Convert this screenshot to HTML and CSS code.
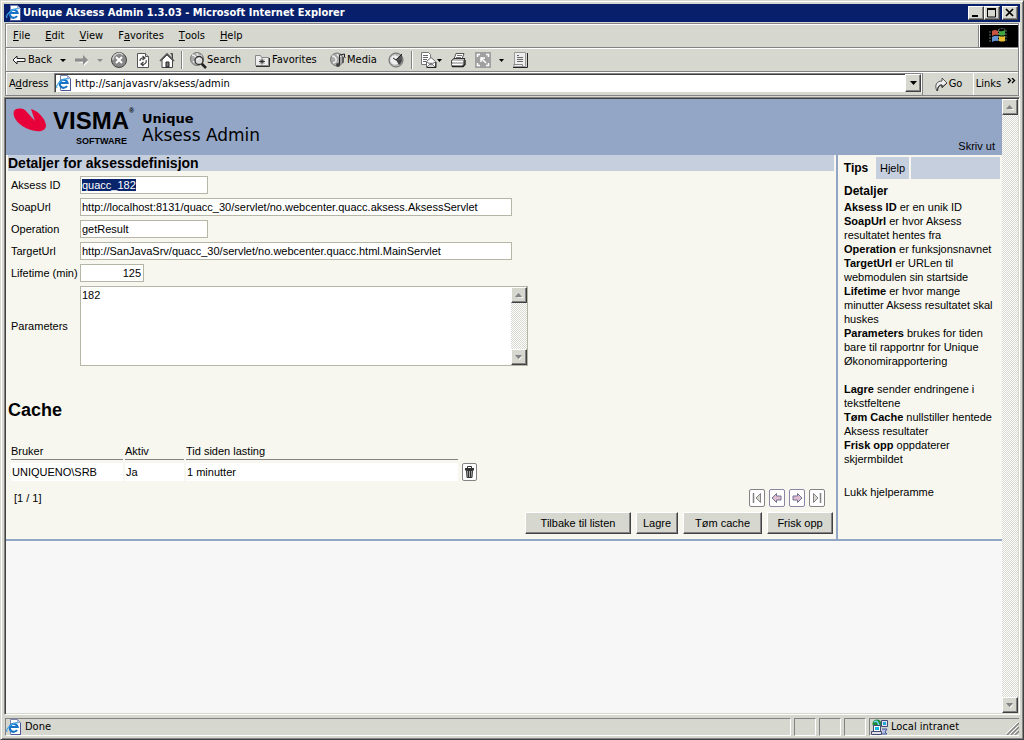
FILE: index.html
```
<!DOCTYPE html>
<html lang="no">
<head>
<meta charset="utf-8">
<title>Unique Aksess Admin 1.3.03</title>
<link rel="stylesheet" href="styles.css">
</head>
<body>
<svg class="defs" aria-hidden="true">
  <symbol id="ie" viewBox="0 0 16 16">
    <path d="M4.500.5h7l3 3v12h-10z" fill="#fff" stroke="#7b86b5"/>
    <path d="M14.500 4v11.500H5" fill="none" stroke="#4a559c"/>
    <path d="M11.500.5v3h3z" fill="#b5c3e7" stroke="#7b86b5" stroke-width=".6"/>
    <path d="M11 11a4 4 0 1 1 .6-3H4" fill="none" stroke="#1873c6" stroke-width="2.200"/>
    <path d="M1 13C-1 10 8 2 12.500 4" fill="none" stroke="#42a6e7" stroke-width="1.200"/>
  </symbol>
  <symbol id="up" viewBox="0 0 8 5"><path d="M1 5h7v-1z" fill="#fff"/><path d="M0 4h7L3.500 0z" fill="#848284"/></symbol>
  <symbol id="down" viewBox="0 0 8 5"><path d="M8 1L4.500 5l-1-1z" fill="#fff"/><path d="M0 0h7L3.500 4z" fill="#848284"/></symbol>
</svg>
<div class="window">
  <header class="titlebar">
    <svg class="i16"><use href="#ie"/></svg>
    <span class="title">Unique Aksess Admin 1.3.03 - Microsoft Internet Explorer</span>
    <button class="wbtn" aria-label="Minimize"><svg width="12" height="10"><path d="M2 7h6v2H2z"/></svg></button>
    <button class="wbtn" aria-label="Maximize"><svg width="12" height="10"><path d="M1.500 1v8h8V1M1 1h9" fill="none" stroke="#000"/><path d="M1 0h9v2H1z"/></svg></button>
    <button class="wbtn close" aria-label="Close"><svg width="12" height="10"><path d="M2 1l7 7M9 1L2 8" stroke="#000" stroke-width="1.700"/></svg></button>
  </header>
  <div class="bars">
    <div class="menurow">
      <nav class="menu">
        <button><u>F</u>ile</button><button><u>E</u>dit</button><button><u>V</u>iew</button><button>F<u>a</u>vorites</button><button><u>T</u>ools</button><button><u>H</u>elp</button>
      </nav>
      <div class="throbber"><svg width="20" height="18" viewBox="0 0 20 18">
        <path d="M3 4q3-2 6 0v4q-3-1-6 1z" fill="#c65542"/><path d="M10 4q3 1 6-1v5q-3 1-6 0z" fill="#42a642"/><path d="M3 10q3-2 6-1v5q-3-1-6 1z" fill="#6394d6"/><path d="M10 9q3 1 6 0v5q-3 1-6 0z" fill="#e7bd31"/><path d="M1 4v11M9.500 3v12M17 3v11M9 3q4-3 8 0" stroke="#63756b" fill="none" stroke-dasharray="2 1"/></svg></div>
    </div>
    <div class="toolbar">
      <button class="back"><svg width="14" height="12"><path d="M1 6l4-4v2.500h8v3H5V10z" fill="#fff" stroke="#222"/></svg>Back</button>
      <button class="arrow" aria-label="Back history"><svg width="6" height="3"><path d="M0 0h6L3 3z"/></svg></button>
      <button class="fwd" aria-label="Forward"><svg width="14" height="12"><path d="M14 7l-5 5V9H2z" fill="#fff"/><path d="M13 6L8 1v3.500H0v3h8V11z" fill="#8c8c8c"/></svg></button>
      <button class="arrow" aria-label="Forward history"><svg width="6" height="3"><path d="M0 0h6L3 3z" fill="#8c8c8c"/></svg></button>
      <button class="t-stop" aria-label="Stop"><svg width="16" height="16"><circle cx="8" cy="8" r="7.500" fill="#888" stroke="#444"/><path d="M2 8a6 6 0 0 1 10-5" stroke="#ccc" fill="none" stroke-width="1.500"/><path d="M5 5l6 6M11 5l-6 6" stroke="#fff" stroke-width="2"/></svg></button>
      <button class="t-refresh" aria-label="Refresh"><svg width="16" height="16"><path d="M2.500 1.500h8l3 3v11h-11z" fill="#fff" stroke="#555"/><path d="M10.500 1.500v3h3" fill="#ccc" stroke="#555"/><path d="M5 9a3 3 0 0 1 4-3M7.500 4L10 6 7.500 8M11 8a3 3 0 0 1-4 4M8.500 10L6 12l2.500 2" fill="none" stroke="#444" stroke-width="1.200"/></svg></button>
      <button class="t-home" aria-label="Home"><svg width="16" height="16"><path d="M11.500 1.500h2v6" fill="#888" stroke="#444"/><path d="M3 8v7.500h10.500V8L8 3z" fill="#fff" stroke="#444"/><path d="M1 9l7-7 7 7" fill="none" stroke="#555" stroke-width="1.600"/><path d="M7 10h3v5H7z" fill="#777" stroke="#222"/></svg></button>
      <span class="sep"></span>
      <button class="t-search"><svg width="17" height="17"><circle cx="7" cy="7" r="6.500" fill="#aaa" stroke="#777"/><path d="M2 3q3 0 4 3t-3 4M7 1q0 4 5 3" fill="none" stroke="#eee" stroke-width="1.500"/><path d="M11 11l5 5" stroke="#222" stroke-width="2.500"/><circle cx="9" cy="8.500" r="4" fill="#ddd" stroke="#333" stroke-width="1.300"/><path d="M7 8q1-2 3-2" stroke="#fff" fill="none"/></svg>Search</button>
      <button class="t-fav"><svg width="16" height="16"><path d="M1.500 13.500v-10h5l1 2h7v8z" fill="#eee" stroke="#888"/><path d="M2 14.500h13.500V6" fill="none" stroke="#333"/><path d="M8 6.500v6M5 9.500h6M6 7.500l4 4M10 7.500l-4 4" stroke="#222" stroke-width=".9"/></svg>Favorites</button>
      <button class="t-media"><svg width="17" height="16"><circle cx="7" cy="7.500" r="6.500" fill="#aaa" stroke="#777"/><path d="M2 4q3 0 4 3t-3 4M7 2q1 3 4 2" fill="none" stroke="#eee" stroke-width="1.500"/><path d="M9.500 13V3l5-1v2M13 5v6" fill="none" stroke="#222"/><ellipse cx="8" cy="13" rx="2" ry="2" fill="#444"/><path d="M14.500 3v2l1 1" stroke="#222" fill="none"/></svg>Media</button>
      <button class="t-history" aria-label="History"><svg width="17" height="16"><circle cx="8" cy="8" r="7" fill="#bbb" stroke="#666"/><circle cx="7" cy="8" r="5" fill="#eee" stroke="#999" stroke-dasharray="1 2"/><path d="M7 8l7-6v7z" fill="#555"/><path d="M8 8L5 6M8 8l6-6" stroke="#222"/><path d="M8 8h6a6 6 0 0 1-3 5z" fill="#444"/></svg></button>
      <span class="sep"></span>
      <button class="t-mail" aria-label="Mail"><svg width="17" height="16"><path d="M1.500.5h7l2 2v10h-9z" fill="#fff" stroke="#777"/><path d="M3 3.500h5M3 5.500h5M3 7.500h4M3 9.500h3" stroke="#666"/><path d="M6.500 9.500L11 5.500l4.500 4v6h-9z" fill="#fff" stroke="#666"/><path d="M7 15l4-4 4 4M7 10l4 3 4-3" fill="#ddd" stroke="#777"/><path d="M7 15.500h9V10" stroke="#222" fill="none"/></svg></button>
      <button class="arrow mini" aria-label="Mail options"><svg width="6" height="3"><path d="M0 0h5L2.500 3z"/></svg></button>
      <button class="t-print" aria-label="Print"><svg width="17" height="16"><path d="M6 1.500h8L12 7H4z" fill="#fff" stroke="#555"/><path d="M7 3.500h5M6 5.500h5" stroke="#777"/><path d="M1.500 8.500L4 6.500h11l-1 2v5l-2 1h-10z" fill="#bbb" stroke="#333"/><path d="M2 9.500h11M2 12.500h10" stroke="#fff"/><path d="M2 14.500h11l2-2V8" fill="none" stroke="#222" stroke-width="1.400"/></svg></button>
      <button class="t-edit" aria-label="Edit"><svg width="16" height="16"><path d="M0 0h16v16H0z" fill="#a0a0a0"/><path d="M2.500 5V2.500H5M11 2.500h2.500V5M13.500 11v2.500H11M5 13.500H2.500V11M6 10V6h4M6 6l5 5" fill="none" stroke="#fff" stroke-width="1.500"/></svg></button>
      <button class="arrow" aria-label="Edit options"><svg width="6" height="3"><path d="M0 0h5L2.500 3z"/></svg></button>
      <button class="t-disc" aria-label="Discuss"><svg width="16" height="16"><path d="M2.500.5h11v14H1.500l1-2z" fill="#eee" stroke="#999"/><path d="M5 3.500h2M5 5.500h6M5 7.500h6M5 9.500h6" stroke="#666"/><path d="M1 15.500h14.500V1" fill="none" stroke="#222"/><path d="M1.500 12.500h9v2" fill="none" stroke="#888"/></svg></button>
    </div>
    <div class="addressrow">
      <label for="url">A<u>d</u>dress</label>
      <div class="combo"><svg class="i16"><use href="#ie"/></svg><input id="url" value="http://sanjavasrv/aksess/admin"><button class="raised drop" aria-label="Open address list"><svg width="7" height="4"><path d="M0 0h7L3.500 4z"/></svg></button></div>
      <button class="go"><svg width="14" height="15"><path d="M3 14C0 8 3 4 8 4V1l5 5-5 4.500V8Q4 7 3 14z" fill="#eee" stroke="#555"/><path d="M13 6L8 10.500V8Q4 8 3.500 14" fill="none" stroke="#333"/></svg>Go</button>
      <button class="links">Links <svg width="9" height="7"><path d="M1 0l2.500 2.500L1 5M5 0l2.500 2.500L5 5" fill="none" stroke="#000" stroke-width="1.400"/></svg></button>
    </div>
  </div>
  <div class="view">
    <main class="page">
      <header class="brand">
        <svg class="mark" width="34" height="26" viewBox="0 0 34 26"><path d="M1 3C3 0 8 0 12 2l10 11L18 1c7 2 14 9 15 16 0 5-4 7-10 6C12 22-2 12 1 3z" fill="#e70039"/></svg>
        <div class="logo"><div class="visma">VISMA<sup>®</sup></div><div class="software">SOFTWARE</div></div>
        <div class="product"><b>Unique</b><span>Aksess Admin</span></div>
        <a class="print" href="#">Skriv ut</a>
      </header>
      <div class="columns">
        <section class="details">
          <h1>Detaljer for aksessdefinisjon</h1>
          <form class="form">
            <label for="f1">Aksess ID</label><input id="f1" class="medium" value="quacc_182">
            <label for="f2">SoapUrl</label><input id="f2" class="wide" value="http://localhost:8131/quacc_30/servlet/no.webcenter.quacc.aksess.AksessServlet">
            <label for="f3">Operation</label><input id="f3" class="medium" value="getResult">
            <label for="f4">TargetUrl</label><input id="f4" class="wide" value="http://SanJavaSrv/quacc_30/servlet/no.webcenter.quacc.html.MainServlet">
            <label for="f5">Lifetime (min)</label><input id="f5" class="short" value="125">
            <label for="f6">Parameters</label>
            <div class="area"><textarea id="f6">182</textarea><div class="scroll"><button type="button" class="raised" aria-label="Up"><svg width="8" height="5"><use href="#up"/></svg></button><button type="button" class="raised" aria-label="Down"><svg width="8" height="5"><use href="#down"/></svg></button></div></div>
          </form>
          <h2>Cache</h2>
          <table>
            <thead><tr><th class="c1">Bruker</th><th class="c2">Aktiv</th><th class="c3">Tid siden lasting</th><td class="c4"></td></tr></thead>
            <tbody><tr><td>UNIQUENO\SRB</td><td>Ja</td><td>1 minutter</td><td class="c4"><button class="icon" aria-label="Slett"><svg width="11" height="12"><path d="M3.500 2V.5h4V2M1 2.500h9" fill="none" stroke="#333"/><path d="M1 3h9v1.500H1z" fill="#333"/><path d="M2.500 4.500h6l-.5 7H3z" fill="#aaa" stroke="#333"/><path d="M4.500 5v6M6.500 5v6" stroke="#333"/></svg></button></td></tr></tbody>
          </table>
          <div class="pager"><span>[1 / 1]</span><div class="pages">
            <button class="icon" aria-label="Første"><svg width="12" height="12"><path d="M2.500 1v10" stroke="#848284" stroke-width="1.500"/><path d="M9.500 1.500v9L5 6z" fill="#d6d7ce" stroke="#848284"/></svg></button>
            <button class="icon tint" aria-label="Forrige"><svg width="12" height="12"><path d="M1 6l4.500-4.500V4H10v4H5.500v2.500z" fill="#e0bdd0" stroke="#737394"/></svg></button>
            <button class="icon tint" aria-label="Neste"><svg width="12" height="12"><path d="M11 6L6.500 1.500V4H2v4h4.500v2.500z" fill="#e0bdd0" stroke="#737394"/></svg></button>
            <button class="icon" aria-label="Siste"><svg width="12" height="12"><path d="M9.500 1v10" stroke="#848284" stroke-width="1.500"/><path d="M2.500 1.500v9L7 6z" fill="#d6d7ce" stroke="#848284"/></svg></button></div></div>
          <div class="actions"><button class="raised b1">Tilbake til listen</button><button class="raised b2">Lagre</button><button class="raised b3">Tøm cache</button><button class="raised b4">Frisk opp</button></div>
        </section>
        <aside>
          <div class="tabs"><button class="active">Tips</button><button>Hjelp</button><span></span></div>
          <div class="help">
            <h3>Detaljer</h3>
            <p><b>Aksess ID</b> er en unik ID<br><b>SoapUrl</b> er hvor Aksess<br>resultatet hentes fra<br><b>Operation</b> er funksjonsnavnet<br><b>TargetUrl</b> er URLen til<br>webmodulen sin startside<br><b>Lifetime</b> er hvor mange<br>minutter Aksess resultatet skal<br>huskes<br><b>Parameters</b> brukes for tiden<br>bare til rapportnr for Unique<br>Økonomirapportering</p>
            <p><b>Lagre</b> sender endringene i<br>tekstfeltene<br><b>Tøm Cache</b> nullstiller hentede<br>Aksess resultater<br><b>Frisk opp</b> oppdaterer<br>skjermbildet</p>
            <a class="hide" href="#">Lukk hjelperamme</a>
          </div>
        </aside>
      </div>
    </main>
    <div class="scroll"><button class="raised" aria-label="Scroll up"><svg width="8" height="5"><use href="#up"/></svg></button><button class="raised" aria-label="Scroll down"><svg width="8" height="5"><use href="#down"/></svg></button></div>
  </div>
  <footer class="status">
    <div class="cell grow"><svg class="i16"><use href="#ie"/></svg>Done</div><div class="cell"></div><div class="cell"></div><div class="cell"></div>
    <div class="cell zone"><svg width="17" height="16"><circle cx="6" cy="5" r="4.500" fill="#218a39"/><path d="M3 3q3-2 4 1t2 3" stroke="#6bd6ef" fill="none" stroke-width="1.500"/><path d="M10.500 1.500h6v6h-6z" fill="#dee7f7" stroke="#424a73"/><path d="M12 3h3v3h-3z" fill="#21a6d6"/><path d="M2.500 6.500h7v6h-7z" fill="#fff" stroke="#424a73"/><path d="M4 8h4v3H4z" fill="#18b6e7"/><path d="M.5 12.500h10v3H.5z" fill="#dedfe7" stroke="#424a73"/><path d="M11 10h5l-2 3 2 2h-5" fill="#b5bede" stroke="#42559c"/></svg>Local intranet
      <svg class="grip" width="13" height="13"><path d="M1 13L13 1M5 13l8-8M9 13l4-4" stroke="#848284" stroke-width="1.500"/><path d="M0 12L12 0M4 12l8-8M8 12l4-4" stroke="#fff"/></svg></div>
  </footer>
</div>
<script src="page.js"></script>
</body>
</html>
```
FILE: styles.css
```
* { box-sizing: border-box; }
body { margin: 0; background: #d6d7ce; color: #000; font: 11px/14px "Liberation Sans", Arial, sans-serif; }
button { font: inherit; color: inherit; border: 0; padding: 0; background: none; display: flex; align-items: center; justify-content: center; }
input, textarea { font: inherit; color: inherit; border: 0; margin: 0; outline: 0; }
svg { display: block; flex: none; }
a { color: inherit; text-decoration: none; }
.defs { position: absolute; width: 0; height: 0; }
.i16 { width: 16px; height: 16px; }
.window { min-height: 100vh; display: flex; flex-direction: column; padding: 3px; padding-bottom: 2px; border: 1px solid #d6d7ce; border-right-color: #424142; border-bottom-color: #424142; box-shadow: inset 1px 1px #fff, inset -1px -1px #848284; }
.titlebar, .bars, .status { font-family: "DejaVu Sans Condensed", "DejaVu Sans", sans-serif; }
.titlebar { height: 18px; display: flex; align-items: center; padding: 0 2px; background: #08206b; color: #fff; }
.title { flex: 1; padding-left: 1px; font-weight: bold; white-space: nowrap; }
.raised, .wbtn { background: #d6d7ce; border: 1px solid #fff; border-right-color: #424142; border-bottom-color: #424142; box-shadow: inset -1px -1px #848284; }
.wbtn { width: 16px; height: 14px; }
.close { margin-left: 2px; }
.bars { margin: 1px 1px 0 1px; border: 1px solid #848284; border-bottom: 0; box-shadow: inset 1px 1px #fff, 1px 0 #fff; }
.menurow { height: 24px; display: flex; padding-top: 1px; border-bottom: 1px solid #848284; }
.menu { flex: 1; display: flex; gap: 15px; padding-left: 7px; }
.throbber { width: 40px; display: flex; align-items: center; justify-content: center; background: #000; border-left: 1px solid #848284; box-shadow: inset 1px 0 #fff; }
.toolbar { height: 24px; display: flex; align-items: center; border-top: 1px solid #fff; border-bottom: 1px solid #848284; padding-left: 6px; }
.back { gap: 2px; }
.arrow { margin-left: 8px; width: 6px; }
.fwd { margin-left: 9px; }
.t-stop, .t-refresh, .t-home { margin-left: 8px; }
.sep { width: 2px; height: 18px; margin: 0 7px 0 6px; border-left: 1px solid #848284; border-right: 1px solid #fff; }
.t-search { width: 64px; justify-content: flex-start; }
.t-fav { gap: 2px; width: 76px; justify-content: flex-start; }
.t-media { width: 58px; justify-content: flex-start; }
.mini { margin-left: 0; }
.t-print { margin-left: 7px; }
.t-edit { margin-left: 8px; }
.t-disc { margin-left: 7px; }
.addressrow { height: 24px; display: flex; border-top: 1px solid #fff; border-bottom: 1px solid #848284; }
.addressrow label { width: 48px; padding: 4px 0 0 3px; }
.combo { flex: 1; display: flex; align-items: center; margin: 0 0 2px; padding-left: 1px; background: #fff; border: 1px solid #848284; border-right-color: #fff; border-bottom-color: #d6d7ce; box-shadow: inset 1px 1px #424142; }
.combo input { flex: 1; min-width: 0; padding: 2px 3px 0; background: none; }
.drop { width: 16px; height: 18px; }
.go { width: 51px; gap: 1px; border-left: 1px solid #848284; }
.links { width: 45px; gap: 6px; border-left: 1px solid #fff; }
.links svg { align-self: flex-start; margin-top: 5px; }
.view { flex: 1; display: flex; margin: 1px 0 0; border: 1px solid #848284; border-right-color: #fff; border-bottom-color: #fff; padding: 1px 1px 1px 0; background: #d6d7ce; box-shadow: inset 1px 1px #424142; }
.page { flex: 1; margin-left: 1px; background: #f7f7f7; }
.scroll { width: 16px; display: flex; flex-direction: column; justify-content: space-between; background: repeating-conic-gradient(#fff 0 25%, #d6d7ce 0 50%) 0 0 / 2px 2px; }
.scroll button { height: 16px; width: 16px; }
.brand { height: 56px; display: flex; background: #94a6c6; padding: 0 7px; }
.mark { margin-top: 9px; }
.logo { width: 95px; padding: 8px 0 0 6px; font-weight: bold; }
.visma { font-size: 24px; line-height: 28px; white-space: nowrap; display: flex; }
.visma sup { font-size: 7px; line-height: 8px; }
.software { font-size: 9px; line-height: 12px; padding-left: 23px; }
.product { flex: 1; display: flex; flex-direction: column; padding-top: 12px; font: 17px/17px "DejaVu Sans", Verdana, sans-serif; }
.product b { font-size: 13px; line-height: 16px; }
.print { align-self: flex-end; padding-bottom: 2px; }
.columns { display: flex; background: #f7f7ef; border-bottom: 2px solid #94a6c6; }
.details { flex: 1; min-width: 0; padding: 0 2px; }
h1 { margin: 0; padding: 0; font-size: 14px; line-height: 16px; background: #c6cfde; }
.form { display: grid; grid-template-columns: 69px 1fr; row-gap: 4px; align-items: center; padding: 5px 0 0 3px; }
.form input, .area { border: 1px solid #b5b6a5; background: #fff; height: 18px; padding: 0 1px; }
.form input::selection { background: #08246b; color: #fff; }
.medium { width: 128px; }
.wide { width: 432px; }
.short { width: 64px; text-align: right; }
.form .short { padding-right: 2px; }
.form .area { width: 448px; height: 80px; display: flex; padding: 0; }
.area textarea { flex: 1; resize: none; padding: 1px; background: #fff; }
h2 { margin: 34px 0 0; font-size: 18px; line-height: 20px; }
table { border-collapse: separate; border-spacing: 2px 0; margin: 24px 0 0 1px; }
th { font-weight: normal; text-align: left; padding: 0 0 1px; height: 16px; border-bottom: 1px solid #848284; }
tbody td { height: 18px; background: #fff; padding: 0 1px; }
tbody::before { content: ""; display: table-row; height: 3px; }
.c1 { width: 112px; }
.c2 { width: 59px; }
.c3 { width: 272px; }
td.c4 { background: none; padding: 0 0 0 2px; }
.icon { width: 15px; height: 18px; border: 1px solid #848284; border-radius: 2px; background: #fff; }
.pages .icon { width: 16px; }
.tint { border-color: #8c86a5; }
.pager { display: flex; align-items: center; justify-content: space-between; margin-top: 8px; padding: 0 9px 0 6px; }
.pages { display: flex; gap: 4px; }
.actions { display: flex; justify-content: flex-end; gap: 5px; padding: 5px 1px; }
.actions button { height: 22px; }
.b1 { width: 106px; }
.b2 { width: 42px; }
.b3 { width: 79px; }
.b4 { width: 66px; }
aside { width: 166px; border-left: 2px solid #94a6c6; }
.tabs { display: flex; gap: 2px; padding: 2px 2px 0 0; height: 24px; }
.tabs button { width: 33px; background: #c6cfde; }
.tabs span { flex: 1; background: #c6cfde; }
.tabs .active { width: 36px; background: none; font-weight: bold; font-size: 12px; }
.help { padding: 5px 0 0 6px; white-space: nowrap; }
h3 { margin: 0 0 2px; font-size: 12px; line-height: 14px; }
p { margin: 0 0 14px; }
.hide { display: block; margin-top: 19px; }
.status { height: 22px; display: flex; gap: 3px; padding: 3px 1px 0; }
.cell { width: 22px; height: 18px; display: flex; align-items: center; gap: 3px; border: 1px solid #848284; border-right-color: #fff; border-bottom-color: #fff; }
.grow { flex: 1; }
.zone { width: 150px; padding-left: 1px; border-right: 0; }
.grip { margin-left: auto; align-self: flex-end; }
```
FILE: page.js
```
const first = document.getElementById("f1");
first.focus();
first.select();
```
